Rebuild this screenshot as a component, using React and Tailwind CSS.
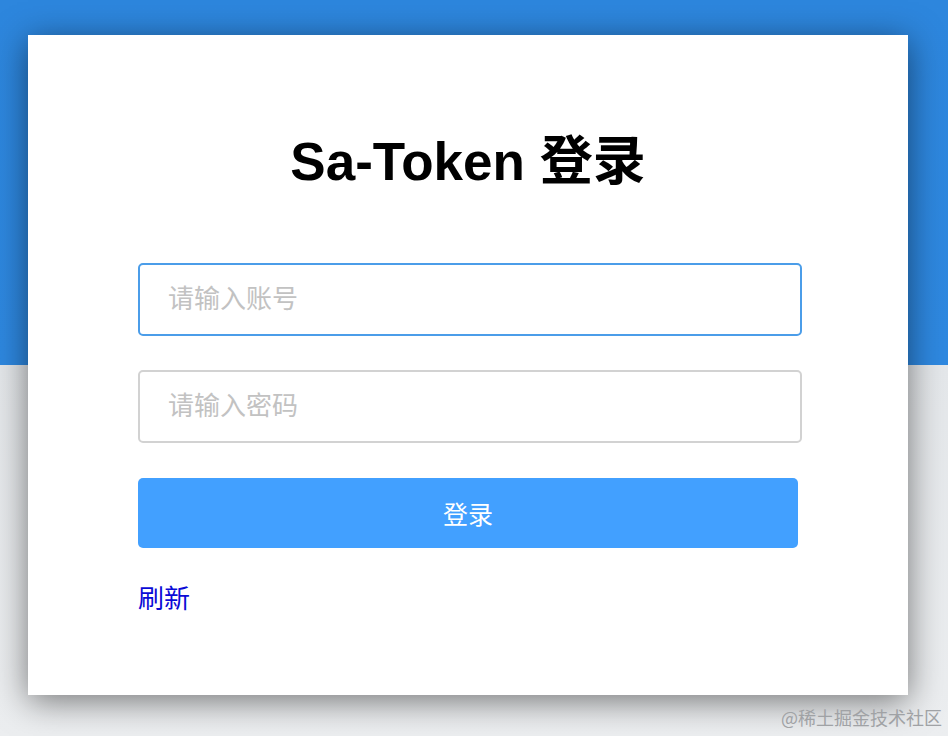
export default function App() {
  return (
    <div className="relative h-[736px] w-full overflow-hidden bg-[linear-gradient(to_bottom,#2d86dd_0,#2e88e0_365px,#e4e7ea_365px,#eceef0_736px)] pt-[35px] pl-[28px] font-['Liberation_Sans','Noto_Sans_CJK_SC',sans-serif]">
      <div className="flex h-[660px] w-[880px] flex-col items-start bg-white pt-[100px] pl-[110px] shadow-[0_6px_32px_rgba(0,0,0,0.5)]">
        <h1 className="w-[660px] text-center text-[53px] font-bold leading-none text-black">Sa-Token 登录</h1>

        <div className="mt-[75px] flex flex-col gap-[34px]">
          <input
            type="text"
            placeholder="请输入账号"
            className="h-[73px] w-[664px] rounded-[5px] border-2 border-[#4b9de9] pl-[28px] text-[26px] outline-none placeholder:text-[#c2c2c2]"
          />
          <input
            type="password"
            placeholder="请输入密码"
            className="h-[73px] w-[664px] rounded-[5px] border-2 border-[#d2d2d2] pl-[28px] text-[26px] outline-none placeholder:text-[#c2c2c2]"
          />
        </div>

        <button className="mt-[35px] h-[70px] w-[660px] rounded-[5px] bg-[#42a0ff] pt-[5px] text-[25px] text-white">登录</button>

        <a href="#" className="mt-[38px] text-[26px] leading-none text-[#0a0ad6]">刷新</a>
      </div>

      <span className="absolute right-[6px] bottom-[5px] text-[18px] text-[#a0a2a5] font-['Noto_Sans_CJK_SC',serif]">@稀土掘金技术社区</span>
    </div>
  )
}
